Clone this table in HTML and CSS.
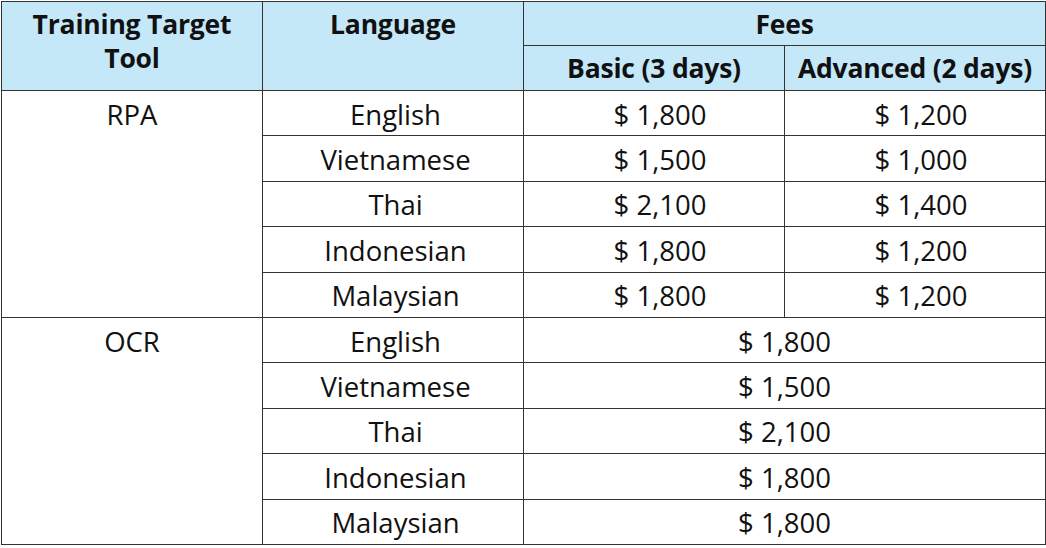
FILE: index.html
```html
<!DOCTYPE html>
<html>
<head>
<meta charset="utf-8">
<link rel="stylesheet" href="styles.css">
</head>
<body>
<table class="fees">
  <colgroup>
    <col class="c"><col class="c"><col class="c"><col class="c">
  </colgroup>
  <thead>
    <tr class="h1">
      <th rowspan="2" class="top">Training Target<br>Tool</th>
      <th rowspan="2" class="top">Language</th>
      <th colspan="2">Fees</th>
    </tr>
    <tr class="h2">
      <th>Basic (3 days)</th>
      <th>Advanced (2 days)</th>
    </tr>
  </thead>
  <tbody>
    <tr><td rowspan="5" class="top">RPA</td><td class="lang">English</td><td class="fee">$ 1,800</td><td class="fee">$ 1,200</td></tr>
    <tr><td class="lang">Vietnamese</td><td class="fee">$ 1,500</td><td class="fee">$ 1,000</td></tr>
    <tr><td class="lang">Thai</td><td class="fee">$ 2,100</td><td class="fee">$ 1,400</td></tr>
    <tr><td class="lang">Indonesian</td><td class="fee">$ 1,800</td><td class="fee">$ 1,200</td></tr>
    <tr><td class="lang">Malaysian</td><td class="fee">$ 1,800</td><td class="fee">$ 1,200</td></tr>
    <tr><td rowspan="5" class="top">OCR</td><td class="lang">English</td><td colspan="2">$ 1,800</td></tr>
    <tr><td class="lang">Vietnamese</td><td colspan="2">$ 1,500</td></tr>
    <tr><td class="lang">Thai</td><td colspan="2">$ 2,100</td></tr>
    <tr><td class="lang">Indonesian</td><td colspan="2">$ 1,800</td></tr>
    <tr><td class="lang">Malaysian</td><td colspan="2">$ 1,800</td></tr>
  </tbody>
</table>
</body>
</html>
```
FILE: styles.css
```css
html, body {
  margin: 0;
  padding: 0;
  background: #ffffff;
}
body {
  padding: 1px 0 0 1px;
}
.fees {
  border-collapse: collapse;
  table-layout: fixed;
  width: 1043px;
  font-family: "Open Sans", "Noto Sans", sans-serif;
  font-size: 27.5px;
  color: #111;
}
.fees .c {
  width: 261px;
}
.fees th,
.fees td {
  border: 1.5px solid #333;
  padding: 0;
  text-align: center;
  vertical-align: middle;
  line-height: 34px;
}
.fees td {
  padding-top: 3px;
}
.fees td.lang {
  padding-left: 5px;
}
.fees td.fee {
  padding-left: 12px;
}
.fees th {
  background: #c5e8f9;
  font-weight: 700;
  font-size: 26.5px;
  letter-spacing: -0.2px;
}
.fees .h1 {
  height: 44px;
}
.fees .h2 {
  height: 45px;
}
.fees tbody tr {
  height: 45.4px;
}
.fees .top {
  vertical-align: top;
  padding-top: 7px;
}
.fees th.top {
  padding-top: 5px;
}
```
